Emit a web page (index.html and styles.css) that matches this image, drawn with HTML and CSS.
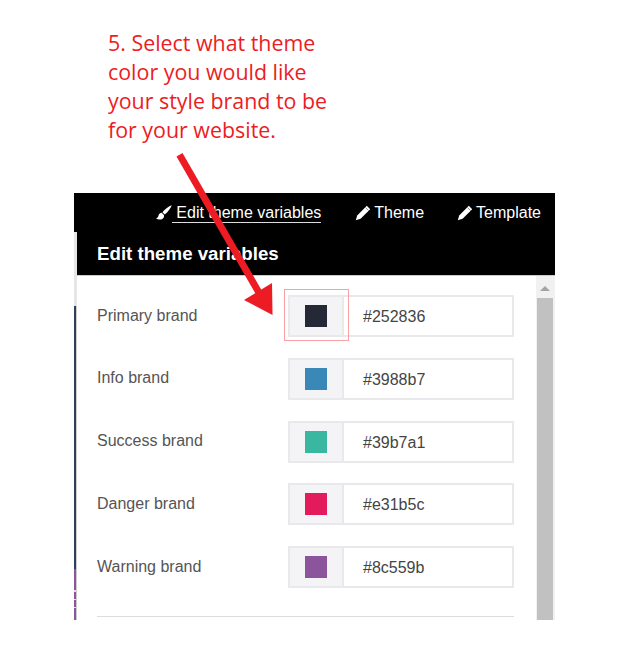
FILE: index.html
```html
<!DOCTYPE html>
<html lang="en">
<head>
    <meta charset="UTF-8">
    <title>Edit theme variables</title>
    <link rel="stylesheet" href="styles.css">
</head>
<body>
    <p class="note">5. Select what theme<br>color you would like<br>your style brand to be<br>for your website.</p>

    <div class="panel">
        <nav class="tabs">
            <a class="tab tab-active" href="#">
                <svg class="icon" viewBox="0 0 16 16"><path d="M15.800.2c-3 1-7 3.900-9.400 7l2.400 2.300c3-2.600 6-6.400 7-9.300zM5.700 7.800c-1.800.1-2.900 1.300-3.200 2.800-.3 1.400-1 2.400-2.500 2.900 2 1.500 5.200 1.500 6.900-.1 1.200-1.100 1.400-2.500 1-3.500z"/></svg>
                <span class="tab-text">Edit theme variables</span>
            </a>
            <a class="tab" href="#">
                <svg class="icon" viewBox="0 0 16 16"><path d="M11.800 .8 15.200 4.200 5.600 13.800 .8 15.200 2.200 10.400z"/><path class="icon-band" d="M10.300 2.300 13.700 5.700"/></svg>
                <span>Theme</span>
            </a>
            <a class="tab" href="#">
                <svg class="icon" viewBox="0 0 16 16"><path d="M11.800 .8 15.200 4.200 5.600 13.800 .8 15.200 2.200 10.400z"/><path class="icon-band" d="M10.300 2.300 13.700 5.700"/></svg>
                <span>Template</span>
            </a>
        </nav>

        <div class="panel-body">
            <div class="sliver">
                <div class="sliver-light"></div>
                <div class="sliver-navy"></div>
                <div class="sliver-purple"></div>
            </div>

            <div class="content">
                <h1 class="title">Edit theme variables</h1>

                <div class="scroller">
                    <form class="vars">
                        <div class="var-row">
                            <label class="var-label">Primary brand</label>
                            <div class="field field-marked">
                                <div class="swatch-cell"><span class="swatch swatch-primary"></span></div>
                                <div class="value">#252836</div>
                            </div>
                        </div>
                        <div class="var-row">
                            <label class="var-label">Info brand</label>
                            <div class="field">
                                <div class="swatch-cell"><span class="swatch swatch-info"></span></div>
                                <div class="value">#3988b7</div>
                            </div>
                        </div>
                        <div class="var-row">
                            <label class="var-label">Success brand</label>
                            <div class="field">
                                <div class="swatch-cell"><span class="swatch swatch-success"></span></div>
                                <div class="value">#39b7a1</div>
                            </div>
                        </div>
                        <div class="var-row">
                            <label class="var-label">Danger brand</label>
                            <div class="field">
                                <div class="swatch-cell"><span class="swatch swatch-danger"></span></div>
                                <div class="value">#e31b5c</div>
                            </div>
                        </div>
                        <div class="var-row">
                            <label class="var-label">Warning brand</label>
                            <div class="field">
                                <div class="swatch-cell"><span class="swatch swatch-warning"></span></div>
                                <div class="value">#8c559b</div>
                            </div>
                        </div>
                        <hr class="divider">
                    </form>

                    <div class="scrollbar">
                        <span class="scroll-up"></span>
                        <div class="scroll-thumb"></div>
                    </div>
                </div>
            </div>
        </div>
    </div>

    <!-- annotation arrow drawn over the panel -->
    <svg class="arrow" width="629" height="672" viewBox="0 0 629 672">
        <path d="M176.500 156.500 182.500 153 262 291 256 294.500z"/>
        <path d="M244 300 272 283 272.500 315z"/>
    </svg>
</body>
</html>
```

FILE: styles.css
```css
* {
    margin: 0;
    padding: 0;
    box-sizing: border-box;
}

body {
    position: relative;
    height: 672px;
    background: #fff;
    overflow: hidden;
    font-family: "Liberation Sans", Arial, sans-serif;
}

.note {
    margin-left: 108px;
    padding-top: 28px;
    height: 193px;
    font-family: "Open Sans", "Noto Sans", sans-serif;
    font-size: 21.4px;
    line-height: 29px;
    color: #ed1c24;
}

.panel {
    margin-left: 74px;
    width: 481px;
    height: 427px;
    overflow: hidden;
    background: #000;
    display: flex;
    flex-direction: column;
}

.tabs {
    display: flex;
    justify-content: flex-end;
    gap: 33px;
    height: 39px;
    padding: 10px 14px 0 0;
}

.tab {
    display: flex;
    align-items: center;
    gap: 3px;
    height: 19px;
    font-size: 16px;
    color: #fff;
    text-decoration: none;
}

.tab-active {
    gap: 0;
    margin-right: 1px;
}

.tab-text {
    padding-left: 4px;
    border-bottom: 1px solid #ddd;
    line-height: 19px;
}

.icon {
    width: 16px;
    height: 16px;
    fill: #fff;
}

.icon-band {
    fill: none;
    stroke: #8a94a0;
    stroke-width: 1;
}

.panel-body {
    flex: 1;
    display: flex;
    min-height: 0;
}

.sliver {
    width: 3px;
    display: flex;
    flex-direction: column;
    background: #ddd;
}

.sliver-light {
    height: 74px;
    background: #e6e6e6;
}

.sliver-navy {
    height: 263px;
    background: #2f3f5c;
    border-right: 1px solid #ccc;
}

.sliver-purple {
    flex: 1;
    border-right: 1px solid #ccc;
    background: linear-gradient(
        #8c559b 21px, #ddd 21px, #ddd 23px,
        #8c559b 23px, #8c559b 30px, #ddd 30px, #ddd 31px,
        #8c559b 31px, #8c559b 38px, #ddd 38px, #ddd 39px,
        #8c559b 39px
    );
}

.content {
    flex: 1;
    display: flex;
    flex-direction: column;
    min-width: 0;
}

.title {
    height: 43px;
    padding: 11px 0 0 20px;
    font-size: 18.7px;
    line-height: 22px;
    font-weight: bold;
    color: #fff;
}

.scroller {
    flex: 1;
    display: flex;
    justify-content: space-between;
    background: #fff;
    border-top: 1px solid #ccc;
    min-height: 0;
}

.vars {
    width: 437px;
    padding: 19px 0 0 20px;
    display: flex;
    flex-direction: column;
    gap: 20.75px;
}

.var-row {
    display: flex;
    align-items: center;
    justify-content: space-between;
    height: 42px;
}

.var-label {
    font-size: 16px;
    color: #555;
    margin-top: -1px;
}

.field {
    position: relative;
    display: flex;
    width: 226px;
    height: 42px;
    border: 2px solid #e9e9ec;
}

/* highlight box from the tutorial */
.field-marked::after {
    content: "";
    position: absolute;
    left: -6px;
    top: -8px;
    width: 63px;
    height: 50px;
    border: 1px solid #f9a0a4;
}

.swatch-cell {
    width: 54px;
    display: flex;
    align-items: center;
    justify-content: center;
    background: #f4f4f7;
    border-right: 2px solid #e9e9ec;
}

.swatch {
    width: 22px;
    height: 22px;
}

.swatch-primary { background: #252836; }
.swatch-info { background: #3988b7; }
.swatch-success { background: #39b7a1; }
.swatch-danger { background: #e31b5c; }
.swatch-warning { background: #8c559b; }

.value {
    padding-left: 19px;
    font-size: 16px;
    line-height: 39px;
    color: #444;
}

.divider {
    border: 0;
    border-top: 1px solid #ddd;
    margin-top: 7px;
}

.scrollbar {
    position: relative;
    width: 19px;
    padding-right: 2px;
    background: #f1f1f1;
    display: flex;
    flex-direction: column;
    align-items: flex-end;
}

.scroll-up {
    margin: 10px 3px 0 0;
    width: 0;
    height: 0;
    border-left: 5px solid transparent;
    border-right: 5px solid transparent;
    border-bottom: 5px solid #a3a3a3;
}

.scroll-thumb {
    flex: 1;
    width: 16px;
    margin-top: 7px;
    background: #c1c1c1;
}

.arrow {
    position: absolute;
    left: 0;
    top: 0;
    fill: #ed1c24;
    pointer-events: none;
}
```
